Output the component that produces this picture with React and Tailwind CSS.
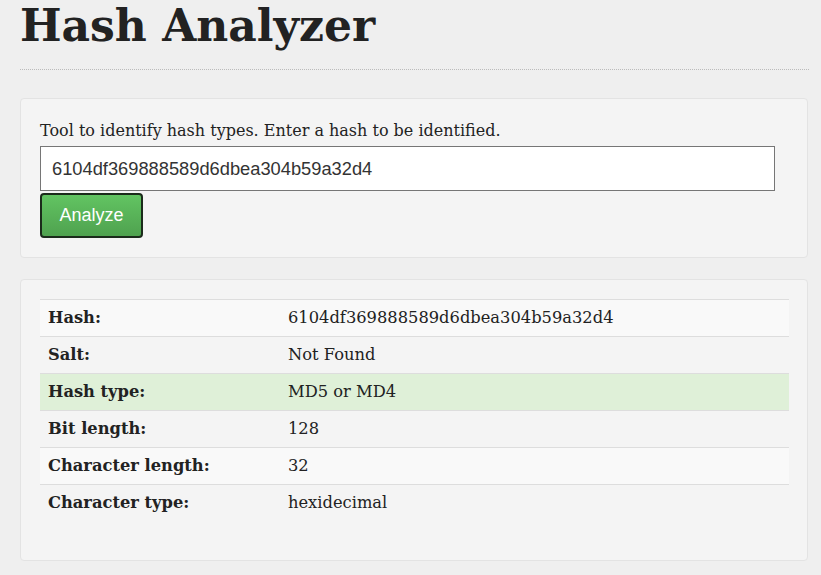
import React from 'react';

const rows = [
  { label: 'Hash:', value: '6104df369888589d6dbea304b59a32d4', tone: 'bg-[#f9f9f9]' },
  { label: 'Salt:', value: 'Not Found', tone: '' },
  { label: 'Hash type:', value: 'MD5 or MD4', tone: 'bg-[#dff0d8]' },
  { label: 'Bit length:', value: '128', tone: '' },
  { label: 'Character length:', value: '32', tone: 'bg-[#f9f9f9]' },
  { label: 'Character type:', value: 'hexidecimal', tone: '' },
];

const serif = "font-['DejaVu_Serif',Georgia,serif]";
const sans = "font-['Liberation_Sans',Arial,sans-serif]";

export default function App() {
  return (
    <div className={`min-h-screen bg-[#efefef] text-[#222] ${serif}`}>
      <div className="px-[20px]">
        {/* Heading */}
        <div className="w-[789px] border-b border-dotted border-[#bbb] h-[70px] pt-[2px]">
          <h1 className="text-[44px] font-bold leading-[48px] text-[#222]">Hash Analyzer</h1>
        </div>

        {/* Input well */}
        <div className="mt-[28px] w-[788px] bg-[#f4f4f4] border border-[#e3e3e3] rounded-[4px] p-[19px] h-[160px]">
          <p className="text-[16px] leading-[24px] text-[#222] mb-[3px] pt-[1px]">
            Tool to identify hash types. Enter a hash to be identified.
          </p>
          <div
            className={`w-[735px] h-[45px] bg-white border border-[#767676] px-[11px] flex items-center text-[18.3px] text-[#333] ${sans}`}
          >
            6104df369888589d6dbea304b59a32d4
          </div>
          <button
            className={`mt-[2px] w-[103px] h-[45px] rounded-[4px] border-2 border-[#1b2b1b] bg-gradient-to-b from-[#62c462] to-[#4fa24f] text-white text-[18px] ${sans}`}
          >
            Analyze
          </button>
        </div>

        {/* Results well */}
        <div className="mt-[21px] w-[788px] bg-[#f4f4f4] border border-[#e3e3e3] rounded-[4px] p-[19px] pb-[39px]">
          <div className="w-[749px]">
            {rows.map((r) => (
              <div
                key={r.label}
                className={`flex h-[37px] items-center border-t border-[#dddddd] ${r.tone}`}
              >
                <div className="w-[240px] pl-[8px] text-[16.3px] font-bold">{r.label}</div>
                <div className="pl-[8px] text-[16.3px]">{r.value}</div>
              </div>
            ))}
          </div>
        </div>
      </div>
    </div>
  );
}
